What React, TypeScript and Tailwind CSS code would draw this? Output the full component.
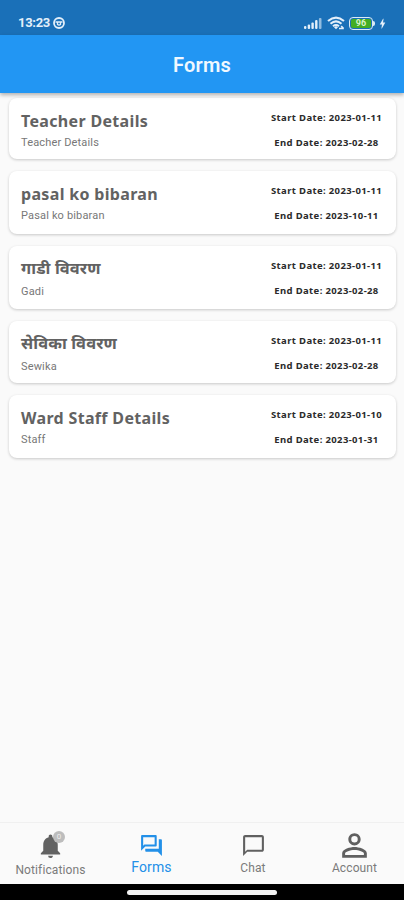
import React from 'react';
import { MdBolt, MdChatBubbleOutline, MdNotifications, MdOutlineForum, MdPersonOutline } from 'react-icons/md';

const forms = [
  { title: 'Teacher Details', subtitle: 'Teacher Details', start: '2023-01-11', end: '2023-02-28', size: 'h-[61px]' },
  { title: 'pasal ko bibaran', subtitle: 'Pasal ko bibaran', start: '2023-01-11', end: '2023-10-11', size: 'h-[63px]' },
  { title: 'गाडी विवरण', subtitle: 'Gadi', start: '2023-01-11', end: '2023-02-28', size: 'h-[63px]', nepali: true },
  { title: 'सेविका विवरण', subtitle: 'Sewika', start: '2023-01-11', end: '2023-02-28', size: 'h-[62px]', nepali: true },
  { title: 'Ward Staff Details', subtitle: 'Staff', start: '2023-01-10', end: '2023-01-31', size: 'h-[63px]' },
];

const StatusBar = () => (
  <div className="flex h-[35px] shrink-0 items-end justify-between bg-[#1a70b8] pr-[18px] pb-[4px] pl-[18px] text-[#e3effa]">
    <div className="flex items-center gap-[3px]">
      <span className="w-[32px] text-[13px] leading-[16px] font-bold tracking-[-0.3px] whitespace-nowrap">13:23</span>
      <svg className="h-[12px] w-[12px]" viewBox="0 0 12 12" fill="none" stroke="currentColor">
        <circle cx="6" cy="6" r="5" strokeWidth="1.8" />
        <path d="M2.500 5h7M4.500 5.500v2q1.500 1 3 0v-2" strokeWidth="1.300" />
      </svg>
    </div>
    <div className="flex h-[16px] items-center">
      <svg className="h-[12px] w-[18px]" viewBox="0 0 18 12" fill="currentColor">
        <rect x="0" y="9" width="2.4" height="3" rx="1" />
        <rect x="3.7" y="7.5" width="2.4" height="4.5" rx="1" />
        <rect x="7.4" y="5.5" width="2.4" height="6.5" rx="1" />
        <rect x="11.1" y="3" width="2.4" height="9" rx="1" />
        <rect x="14.9" y="1" width="2.6" height="11" rx="1" opacity=".6" />
      </svg>
      <svg className="ml-[5px] h-[14px] w-[18px]" viewBox="0 0 18 14" fill="none" stroke="currentColor" strokeWidth="2.1">
        <path d="M1 5Q9-1.800 17 5M3.500 7.700q5.500-4.700 11 0M6 10.200q3-2.400 6 0" />
        <path d="M7 11.300l2-1.300 2 1.300-2 2z" fill="currentColor" stroke="none" />
        <path d="M12 12.500h4.800M14.200 10.200l2.400 2.300" strokeWidth="1.600" />
      </svg>
      <div className="ml-[4px] flex h-[13px] w-[24px] rounded-[4px] border-[1.5px] border-[#dcebf5] p-[1px]">
        <div className="flex h-full w-full items-center justify-center rounded-[2px] bg-[#43ad22] text-[9px] leading-none font-bold text-[#d9f3c9]">
          96
        </div>
      </div>
      <div className="h-[5px] w-[2px] rounded-r bg-[#dcebf5]" />
      <MdBolt className="-mr-[3px] ml-[1px] h-[15px] w-[13px]" />
    </div>
  </div>
);

const FormCard = ({ form }: { form: (typeof forms)[number] }) => (
  <div
    className={`${form.size} flex justify-between rounded-[8px] bg-white pr-[13px] pl-[12px] font-['Noto_Sans','Open_Sans',sans-serif] shadow-[0_1px_3px_rgba(0,0,0,0.2)]`}
  >
    <div className={form.nepali ? 'pt-[11px]' : 'pt-[12px]'}>
      <h2
        className={`${form.nepali ? 'text-[16.5px] tracking-[0.1px]' : 'text-[16px] tracking-[0.33px]'} leading-[22px] font-bold whitespace-nowrap text-[#626262]`}
      >
        {form.title}
      </h2>
      <p
        className={`${form.nepali ? 'mt-[5px]' : 'mt-[3px]'} font-[Roboto,sans-serif] text-[11px] leading-[16px] tracking-[0.16px] text-[#777]`}
      >
        {form.subtitle}
      </p>
    </div>
    <div className="flex w-[113px] flex-col items-center pt-[13px] text-[9.5px] leading-[14px] font-bold tracking-[0.36px] whitespace-nowrap text-[#2b2b2b]">
      <p>Start Date: {form.start}</p>
      <p className="mt-[11px]">End Date: {form.end}</p>
    </div>
  </div>
);

const BottomNav = () => (
  <nav className="grid h-[62px] shrink-0 grid-cols-4 border-t border-[#f0f0f0] bg-[#fafafa] text-[12px] leading-[14px] tracking-[0.12px] text-[#7b7b7b]">
    <div className="flex flex-col items-center pt-[8px]">
      <div className="relative">
        <MdNotifications className="h-[30px] w-[29px] text-[#626262]" />
        <span className="absolute top-0 left-[17px] flex h-[12px] w-[12px] items-center justify-center rounded-full bg-[#bdbdbd] text-[8px] leading-none tracking-normal text-[#eee]">
          0
        </span>
      </div>
      <span className="mt-[2px]">Notifications</span>
    </div>
    <div className="flex flex-col items-center pt-[10px] text-[#2390e8]">
      <MdOutlineForum className="h-[25px] w-[25px]" />
      <span className="mt-[1px] text-[14px] leading-[16px]">Forms</span>
    </div>
    <div className="flex flex-col items-center pt-[10px] pl-[1px]">
      <MdChatBubbleOutline className="h-[25px] w-[25px] text-[#606060]" />
      <span className="mt-[3px]">Chat</span>
    </div>
    <div className="flex flex-col items-center pt-[4px] pl-[2px]">
      <MdPersonOutline className="h-[37px] w-[37px] text-[#606060]" />
      <span className="-mt-[3px]">Account</span>
    </div>
  </nav>
);

const App = () => {
  return (
    <div className="flex h-[900px] w-full flex-col overflow-hidden bg-[#fafafa] font-[Roboto,sans-serif]">
      <StatusBar />
      <header className="z-10 flex h-[58px] shrink-0 items-center justify-center bg-[#2296f3] pt-[2px] text-[20px] leading-6 font-semibold tracking-[0.2px] text-[#f0f8ff] shadow-[0_2px_4px_rgba(0,0,0,0.3)]">
        Forms
      </header>
      <main className="flex flex-1 flex-col gap-[12px] pt-[5px] pr-[8px] pl-[9px]">
        {forms.map((form) => (
          <FormCard key={form.title} form={form} />
        ))}
      </main>
      <BottomNav />
      <div className="flex h-[16px] shrink-0 justify-center bg-black pt-[6px]">
        <div className="h-[5px] w-[150px] rounded-full bg-[#f3f3f3]" />
      </div>
    </div>
  );
};

export default App;
